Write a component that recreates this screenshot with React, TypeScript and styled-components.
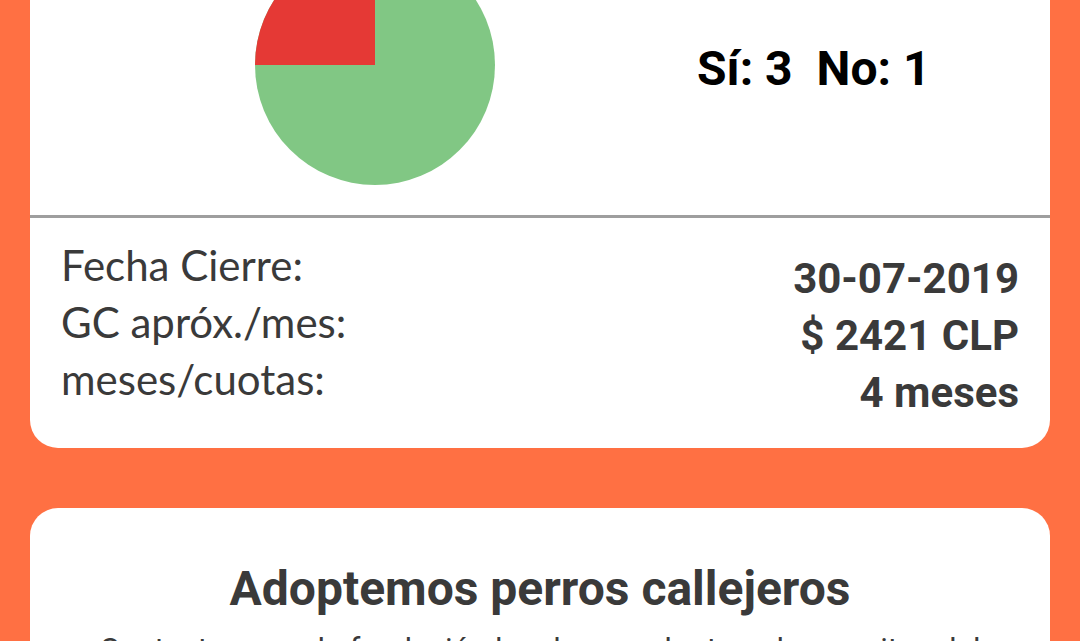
import React from "react";
import styled, { createGlobalStyle } from "styled-components";

const GlobalStyle = createGlobalStyle`
  html, body {
    margin: 0;
    padding: 0;
    background: #ff7043;
    overflow: hidden;
  }
  * { box-sizing: border-box; }
`;

const Page = styled.div`
  width: 1080px;
  height: 641px;
  overflow: hidden;
  background: #ff7043;
  padding: 0 30px;
  display: flex;
  flex-direction: column;
  gap: 60px;
`;

const Card = styled.section<{ $scrolled?: boolean }>`
  background: #ffffff;
  border-radius: 28px;
  margin-top: ${(p) => (p.$scrolled ? "-90px" : "0")};
  flex-shrink: 0;
`;

const ChartRow = styled.div`
  display: flex;
  align-items: center;
  padding: 35px 0 30px 225px;
  gap: 202px;
`;

const Votes = styled.div`
  font-family: Roboto, "Liberation Sans", sans-serif;
  font-weight: 700;
  font-size: 48px;
  color: #000;
  white-space: pre;
  margin-top: 6px;
`;

const Divider = styled.hr`
  border: none;
  height: 3px;
  margin: 0;
  background: #9e9e9e;
`;

const Details = styled.div`
  display: flex;
  justify-content: space-between;
  align-items: flex-start;
  padding: 0 31px 27px 31px;
`;

const Labels = styled.div`
  padding-top: 19px;
  font-family: Lato, "Open Sans", sans-serif;
  font-weight: 400;
  font-size: 42px;
  line-height: 57px;
  color: #3a3a3a;
`;

const Values = styled.div`
  padding-top: 32px;
  font-family: Roboto, "Liberation Sans", sans-serif;
  font-weight: 700;
  font-size: 42px;
  line-height: 57px;
  color: #3a3a3a;
  text-align: right;
`;

const Line = styled.div``;

const Proposal = styled.div`
  padding: 52px 40px 40px;
  text-align: center;
  font-family: Roboto, "Liberation Sans", sans-serif;
  color: #3a3a3a;
`;

const Title = styled.h2`
  margin: 0;
  font-size: 48px;
  font-weight: 700;
  line-height: 1.2;
`;

const Body = styled.p`
  margin: 11px 0 0;
  font-size: 31px;
  line-height: 42px;
`;

const Pie: React.FC<{ yes: number; no: number }> = ({ yes, no }) => {
  const r = 120;
  const total = yes + no;
  const angle = (no / total) * 2 * Math.PI;
  const start = Math.PI;
  const end = start + angle;
  const x1 = r + r * Math.cos(start);
  const y1 = r + r * Math.sin(start);
  const x2 = r + r * Math.cos(end);
  const y2 = r + r * Math.sin(end);
  const large = angle > Math.PI ? 1 : 0;
  return (
    <svg width={240} height={240} viewBox="0 0 240 240">
      <circle cx={r} cy={r} r={r} fill="#81c784" />
      <path
        d={`M ${r} ${r} L ${x1} ${y1} A ${r} ${r} 0 ${large} 1 ${x2} ${y2} Z`}
        fill="#e53935"
      />
    </svg>
  );
};

export default function App() {
  return (
    <>
      <GlobalStyle />
      <Page>
        <Card $scrolled>
          <ChartRow>
            <Pie yes={3} no={1} />
            <Votes>{"Sí: 3  No: 1"}</Votes>
          </ChartRow>
          <Divider />
          <Details>
            <Labels>
              <Line>Fecha Cierre:</Line>
              <Line>GC apróx./mes:</Line>
              <Line>meses/cuotas:</Line>
            </Labels>
            <Values>
              <Line>30-07-2019</Line>
              <Line>$ 2421 CLP</Line>
              <Line>4 meses</Line>
            </Values>
          </Details>
        </Card>
        <Card>
          <Proposal>
            <Title>Adoptemos perros callejeros</Title>
            <Body>
              Contactemos a la fundación local para adoptar a los perritos del
              barrio que viven alrededor del edificio y darles un hogar.
            </Body>
          </Proposal>
        </Card>
      </Page>
    </>
  );
}
